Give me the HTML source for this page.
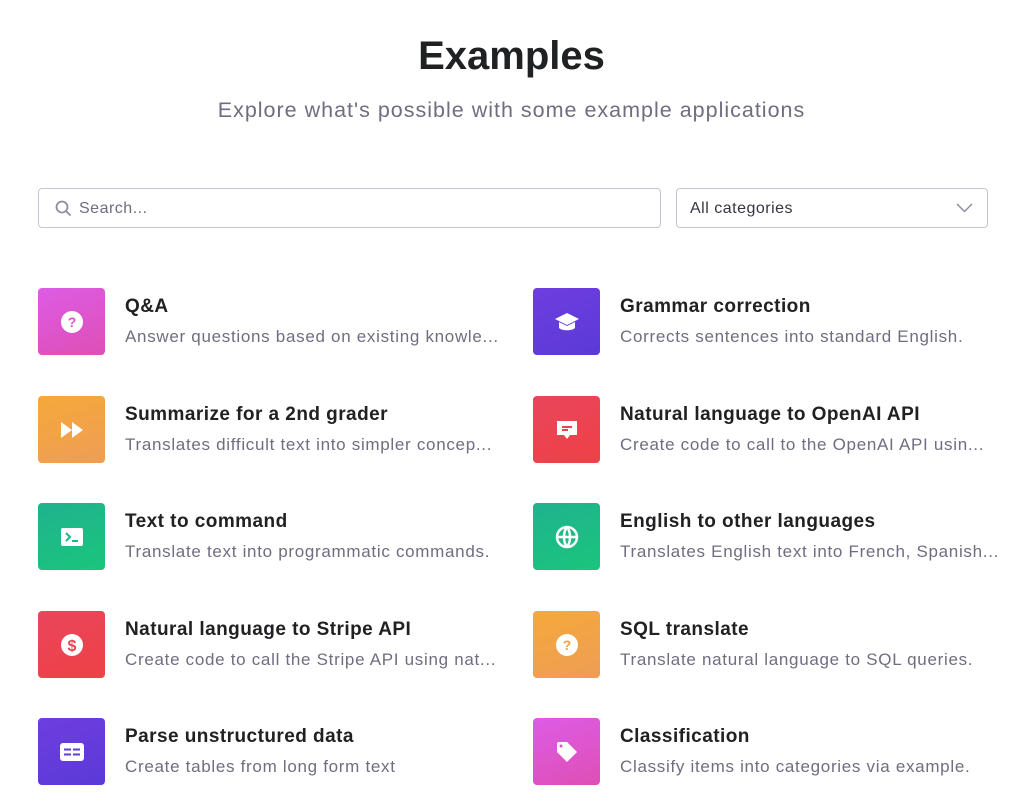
<!DOCTYPE html>
<html><head><meta charset="utf-8"><style>
*{box-sizing:border-box;margin:0;padding:0}
body{width:1023px;height:811px;background:#fff;font-family:"Liberation Sans",sans-serif;color:#202123;position:relative;overflow:hidden}
h1{position:absolute;top:34px;left:0;width:1023px;text-align:center;font-size:40px;font-weight:bold;color:#202123}
.sub{position:absolute;top:98px;left:0;width:1023px;text-align:center;font-size:21.5px;color:#6e6e80;letter-spacing:1px}
.box{position:absolute;top:188px;height:40px;border:1px solid #c5c5d2;border-radius:4px;font-size:16px;color:#6e6e80;line-height:39px;letter-spacing:0.5px}
.item{position:absolute;width:470px;height:67px}
.ic{position:absolute;left:0;top:0;width:67px;height:67px;border-radius:4px;display:flex;align-items:center;justify-content:center}
.t{position:absolute;left:87px;top:8px;font-size:19px;font-weight:bold;color:#202123;white-space:nowrap;letter-spacing:0.45px}
.d{position:absolute;left:87px;top:39px;font-size:17px;color:#6e6e80;white-space:nowrap;letter-spacing:0.7px}
.pink{background:linear-gradient(160deg,#dd5ce5,#de4fb5)}
.orange{background:linear-gradient(160deg,#f5a93a,#ee9d55)}
.green{background:linear-gradient(160deg,#20b28f,#1ac57c)}
.red{background:linear-gradient(160deg,#e9455c,#ef4146)}
.purple{background:linear-gradient(160deg,#6e3de0,#5b3ad7)}
</style></head><body>
<h1>Examples</h1>
<div class="sub">Explore what's possible with some example applications</div>
<div class="box" style="left:38px;width:623px;padding-left:40px">
<svg style="position:absolute;left:16px;top:11px" width="17" height="17" viewBox="0 0 17 17"><circle cx="7" cy="7" r="5.5" fill="none" stroke="#8e8ea0" stroke-width="1.8"/><path d="M11 11l4.5 4.5" stroke="#8e8ea0" stroke-width="1.8"/></svg>Search...</div>
<div class="box" style="left:676px;width:312px;padding-left:13px;color:#353740">All categories
<svg style="position:absolute;right:14px;top:14px" width="17" height="10" viewBox="0 0 17 10"><path d="M1 1l7.5 7.5L16 1" fill="none" stroke="#8e8ea0" stroke-width="1.5"/></svg></div>

<div class="item" style="left:38px;top:288px"><div class="ic pink"><svg width="24" height="24" viewBox="0 0 24 24"><circle cx="12" cy="12" r="11" fill="#fff"/><text x="12" y="17" text-anchor="middle" font-size="14" font-weight="bold" fill="#dd54d0" font-family="Liberation Sans">?</text></svg></div><div class="t">Q&amp;A</div><div class="d">Answer questions based on existing knowle...</div></div>
<div class="item" style="left:533px;top:288px"><div class="ic purple"><svg width="26" height="24" viewBox="0 0 26 24"><path d="M13 3L1 9l12 6 12-6z M5 12v6c3 3 13 3 16 0v-6l-8 4z" fill="#fff"/></svg></div><div class="t">Grammar correction</div><div class="d">Corrects sentences into standard English.</div></div>

<div class="item" style="left:38px;top:396px"><div class="ic orange"><svg width="24" height="18" viewBox="0 0 24 18"><path d="M1 1l11 8-11 8z M12 1l11 8-11 8z" fill="#fff"/></svg></div><div class="t">Summarize for a 2nd grader</div><div class="d">Translates difficult text into simpler concep...</div></div>
<div class="item" style="left:533px;top:396px"><div class="ic red"><svg width="24" height="24" viewBox="0 0 24 24"><path d="M2 3h20v14h-7l-3 4-3-4H2z" fill="#fff"/><path d="M7 9h10M7 12h6" stroke="#ea4556" stroke-width="2"/></svg></div><div class="t">Natural language to OpenAI API</div><div class="d">Create code to call to the OpenAI API usin...</div></div>

<div class="item" style="left:38px;top:503px"><div class="ic green"><svg width="24" height="20" viewBox="0 0 24 20"><rect x="1" y="1" width="22" height="18" rx="2" fill="#fff"/><path d="M6 6l4 4-4 4M12 14h6" fill="none" stroke="#1cb987" stroke-width="2"/></svg></div><div class="t">Text to command</div><div class="d">Translate text into programmatic commands.</div></div>
<div class="item" style="left:533px;top:503px"><div class="ic green"><svg width="24" height="24" viewBox="0 0 24 24" fill="none" stroke="#fff" stroke-width="2.5"><circle cx="12" cy="12" r="10"/><path d="M2 12h20M12 2c-4 5-4 15 0 20M12 2c4 5 4 15 0 20"/></svg></div><div class="t">English to other languages</div><div class="d">Translates English text into French, Spanish...</div></div>

<div class="item" style="left:38px;top:611px"><div class="ic red"><svg width="24" height="24" viewBox="0 0 24 24"><circle cx="12" cy="12" r="11" fill="#fff"/><text x="12" y="18" text-anchor="middle" font-size="16" font-weight="bold" fill="#ec4350" font-family="Liberation Sans">$</text></svg></div><div class="t">Natural language to Stripe API</div><div class="d">Create code to call the Stripe API using nat...</div></div>
<div class="item" style="left:533px;top:611px"><div class="ic orange"><svg width="24" height="24" viewBox="0 0 24 24"><circle cx="12" cy="12" r="11" fill="#fff"/><text x="12" y="17" text-anchor="middle" font-size="14" font-weight="bold" fill="#f0a245" font-family="Liberation Sans">?</text></svg></div><div class="t">SQL translate</div><div class="d">Translate natural language to SQL queries.</div></div>

<div class="item" style="left:38px;top:718px"><div class="ic purple"><svg width="24" height="18" viewBox="0 0 24 18"><rect x="0" y="0" width="24" height="18" rx="3" fill="#fff"/><path d="M4 6.5h7M13 6.5h7M4 11.5h7M13 11.5h7" stroke="#633bdb" stroke-width="2"/></svg></div><div class="t">Parse unstructured data</div><div class="d">Create tables from long form text</div></div>
<div class="item" style="left:533px;top:718px"><div class="ic pink"><svg width="24" height="24" viewBox="0 0 24 24"><path d="M2 4a2 2 0 012-2h8l10 10-10 10L2 12z" fill="#fff"/><circle cx="6" cy="6" r="1.5" fill="#de55c8"/></svg></div><div class="t">Classification</div><div class="d">Classify items into categories via example.</div></div>
</body></html>
